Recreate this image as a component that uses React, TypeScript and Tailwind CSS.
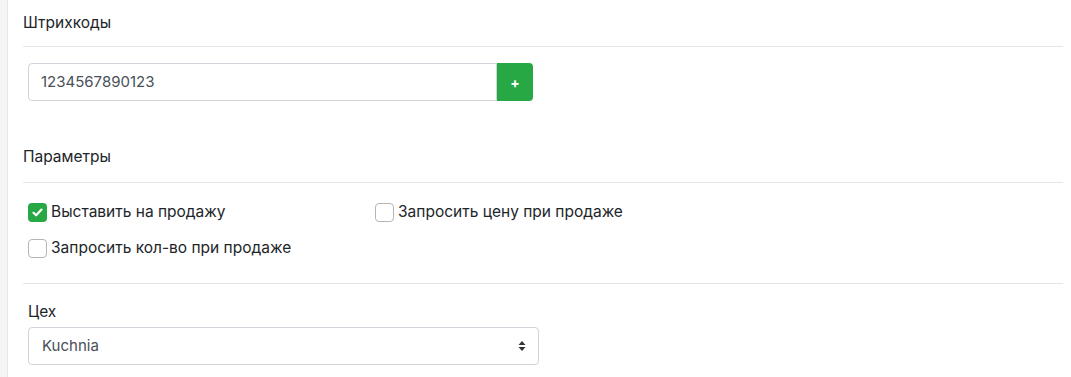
import React from "react";

function Hr() {
  return <div className="h-px bg-[#e5e5e5]" />;
}

function Checkbox({ checked, label }: { checked?: boolean; label: string }) {
  return (
    <div className="flex items-center h-[20px]">
      {checked ? (
        <div className="w-[19px] h-[19px] rounded-[4px] bg-[#28a745] flex items-center justify-center">
          <svg width="11" height="9" viewBox="0 0 11 9" fill="none">
            <path d="M1.5 4.8 L4.2 7.3 L9.5 1.6" stroke="white" strokeWidth="2.2" strokeLinecap="round" strokeLinejoin="round" />
          </svg>
        </div>
      ) : (
        <div className="w-[19px] h-[19px] rounded-[4px] border border-[#b5b5b5] bg-white" />
      )}
      <span className="ml-[4px] text-[15.5px] text-[#212529]">{label}</span>
    </div>
  );
}

export default function App() {
  return (
    <div className="flex min-h-[377px] bg-white" style={{ fontFamily: 'Inter, "Liberation Sans", Arial, sans-serif' }}>
      <div className="w-[8px] shrink-0 bg-[#f5f5f5] border-r border-[#e6e6e6]" />
      <div className="flex-1 pl-[15px] pr-[8px]">
        <div className="pt-[13px] h-[33px] leading-[20px] text-[15.5px] text-[#212529]">Штрихкоды</div>
        <div className="mt-[13px]"><Hr /></div>
        <div className="mt-[16px] ml-[5px] flex w-[505px] h-[38px]">
          <div className="flex-1 flex items-center border border-[#ced4da] rounded-l-[4px] px-[12px] text-[15px] text-[#495057]">
            1234567890123
          </div>
          <div className="w-[36px] bg-[#28a745] rounded-r-[4px] flex items-center justify-center text-white text-[14px] font-bold">
            +
          </div>
        </div>
        <div className="mt-[46px] h-[20px] leading-[20px] text-[15.5px] text-[#212529]">Параметры</div>
        <div className="mt-[15px]"><Hr /></div>
        <div className="ml-[5px] mt-[19px] grid grid-cols-[347px_1fr] gap-y-[16px]">
          <Checkbox checked label="Выставить на продажу" />
          <Checkbox label="Запросить цену при продаже" />
          <Checkbox label="Запросить кол-во при продаже" />
        </div>
        <div className="mt-[25px]"><Hr /></div>
        <div className="ml-[5px] mt-[18px] h-[20px] leading-[20px] text-[15.5px] text-[#212529]">Цех</div>
        <div className="ml-[5px] mt-[5px] w-[511px] h-[38px] border border-[#ced4da] rounded-[4px] flex items-center justify-between pl-[13px] pr-[12px] text-[15px] text-[#495057]">
          <span>Kuchnia</span>
          <svg width="8" height="12" viewBox="0 0 8 12">
            <path d="M4 1 L7.5 5 L0.5 5 Z" fill="#333" />
            <path d="M4 11 L7.5 7 L0.5 7 Z" fill="#333" />
          </svg>
        </div>
      </div>
    </div>
  );
}
